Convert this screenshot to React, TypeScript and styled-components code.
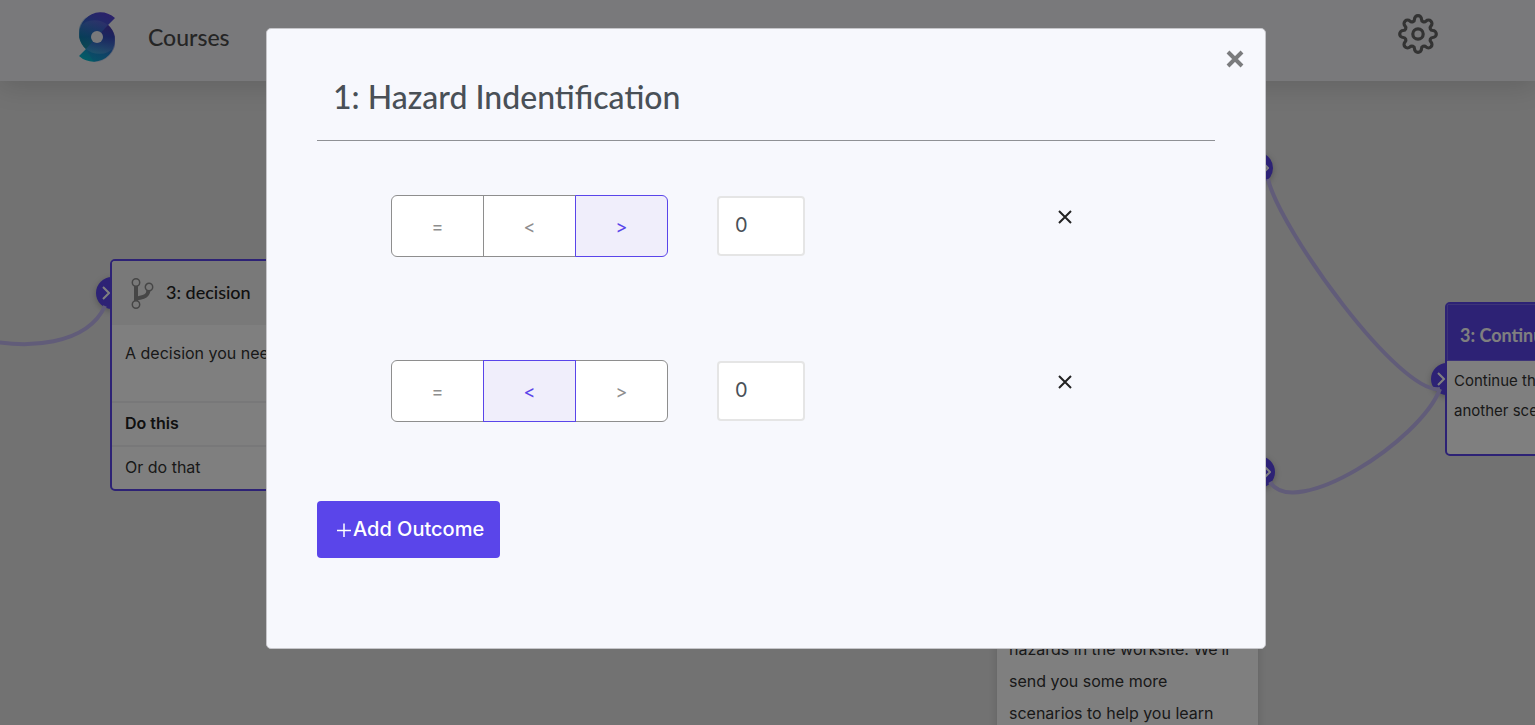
import React, { useState } from "react";
import styled, { createGlobalStyle } from "styled-components";

const brand = "#5a45ea";
const display = `Lato, "Liberation Sans", sans-serif`;
const text = `Inter, "Liberation Sans", sans-serif`;

const GlobalStyle = createGlobalStyle`
  *, *::before, *::after { box-sizing: border-box; }
  body { margin: 0; background: #e4e4e4; font-family: ${text}; color: #333; }
  button, input { font-family: inherit; }
  h1, h2, h3, p, ul { margin: 0; padding: 0; }
`;

const Page = styled.div`
  display: flex;
  flex-direction: column;
  height: 100vh;
  overflow: hidden;
`;

const TopBar = styled.header`
  display: flex;
  align-items: flex-start;
  height: 81px;
  padding: 12px 97px 0 79px;
  background: #f3f3f7;
  box-shadow: 0 4px 28px rgba(0, 0, 0, 0.15);
  position: relative;
  z-index: 1;
`;

const NavLink = styled.a`
  margin-left: 33px;
  font: 500 23px/50px ${display};
  color: #4a4a4a;
  text-decoration: none;
`;

const IconButton = styled.button`
  display: flex;
  align-items: center;
  justify-content: center;
  padding: 0;
  border: 0;
  background: none;
  cursor: pointer;
`;

const SettingsButton = styled(IconButton)`
  width: 40px;
  height: 44px;
  margin-left: auto;
`;

const Canvas = styled.main`
  position: relative;
  flex: 1;
  overflow: hidden;
`;

const Edges = styled.svg`
  position: absolute;
  inset: 0;
  width: 100%;
  height: 100%;
  fill: none;
  stroke: #c2b8f2;
  stroke-width: 4;
`;

const Port = styled.span<{ $x: number; $y: number }>`
  position: absolute;
  left: ${(p) => p.$x}px;
  top: ${(p) => p.$y}px;
  width: 32px;
  height: 32px;
  border-radius: 50%;
  background: ${brand};
  box-shadow: 0 2px 6px rgba(0, 0, 0, 0.25);
`;

const PortChevron = styled.svg<{ $side: "in" | "out" }>`
  display: block;
  width: 8px;
  height: 14px;
  margin: 9px 0 0 ${(p) => (p.$side === "in" ? 6 : 20)}px;
  fill: none;
  stroke: #fff;
  stroke-width: 2;
`;

const Node = styled.article<{ $x: number; $y: number; $w: number; $outlined?: boolean }>`
  position: absolute;
  left: ${(p) => p.$x}px;
  top: ${(p) => p.$y}px;
  width: ${(p) => p.$w}px;
  background: #fff;
  border: ${(p) => (p.$outlined ? `2px solid ${brand}` : "0")};
  border-radius: 5px;
  box-shadow: ${(p) => (p.$outlined ? "none" : "0 0 8px rgba(0, 0, 0, 0.15)")};
  overflow: hidden;
`;

const DecisionHead = styled.div`
  display: flex;
  align-items: center;
  gap: 12px;
  height: 64px;
  padding: 0 0 0 19px;
  background: #f3f3f3;
`;

const NodeTitle = styled.h3<{ $light?: boolean }>`
  padding-bottom: 2px;
  font: ${(p) => (p.$light ? 700 : 500)} 18px/24px ${display};
  color: ${(p) => (p.$light ? "#fff" : "#222")};
  white-space: nowrap;
`;

const NodeText = styled.p<{ $leading: number; $small?: boolean }>`
  font-size: ${(p) => (p.$small ? 15 : 16)}px;
  line-height: ${(p) => p.$leading}px;
  color: #333;
`;

const DecisionBody = styled.div`
  height: 76px;
  padding: 16px 13px;
`;

const Option = styled.div<{ $strong?: boolean }>`
  height: 44px;
  padding: 0 13px;
  border-top: 2px solid #f0f0f2;
  font-size: 16px;
  font-weight: ${(p) => (p.$strong ? 600 : 400)};
  line-height: 41px;
  color: ${(p) => (p.$strong ? "#222" : "#333")};
`;

const ContinueHead = styled.div`
  height: 57px;
  padding: 18px 12px;
  background: ${brand};
  border: 1px solid #7a69f0;
`;

const ContinueBody = styled.div`
  height: 93px;
  padding: 5px 7px;
`;

const StoryBody = styled.div`
  padding: 12px;
`;

const Backdrop = styled.div`
  position: fixed;
  inset: 0;
  z-index: 10;
  padding: 28px 3px 28px 0;
  background: rgba(0, 0, 0, 0.5);
  overflow: auto;
`;

const Dialog = styled.section`
  width: 100%;
  max-width: 1000px;
  margin: 0 auto;
  background: #f7f8fd;
  border: 1px solid #c6c6ca;
  border-radius: 5px;
`;

const DialogTop = styled.div`
  display: flex;
  justify-content: flex-end;
  padding: 20px 20px 0;
`;

const CloseButton = styled(IconButton)`
  width: 20px;
  height: 20px;
`;

const DialogBody = styled.div`
  padding: 8px 50px 90px;
`;

const DialogTitle = styled.h2`
  padding: 0 16px 23px;
  border-bottom: 1px solid #8f9195;
  font: 500 32px/40px ${display};
  color: #495057;
`;

const Outcomes = styled.div`
  display: flex;
  flex-direction: column;
  gap: 103px;
  padding: 54px 138px 79px 74px;
`;

const OutcomeRow = styled.div`
  display: flex;
  align-items: center;
`;

const OperatorGroup = styled.div`
  display: flex;
  margin-right: 49px;
`;

const Operator = styled.button<{ $active: boolean }>`
  position: relative;
  z-index: ${(p) => (p.$active ? 1 : 0)};
  width: 93px;
  height: 62px;
  padding: 0;
  border: 1px solid ${(p) => (p.$active ? brand : "#8e8e8e")};
  background: ${(p) => (p.$active ? "#f0eefb" : "#fff")};
  color: ${(p) => (p.$active ? brand : "#8e8e8e")};
  font-size: 18px;
  cursor: pointer;

  & + & { margin-left: -1px; }
  &:first-child { border-radius: 6px 0 0 6px; }
  &:last-child { border-radius: 0 6px 6px 0; }
`;

const ValueInput = styled.input`
  width: 88px;
  height: 60px;
  padding: 0 16px 2px;
  border: 2px solid #e5e5e5;
  border-radius: 4px;
  background: #fff;
  color: #495057;
  font-size: 20px;
`;

const RemoveButton = styled(IconButton)`
  align-self: flex-start;
  width: 24px;
  height: 24px;
  margin: 10px 0 0 auto;
`;

const AddButton = styled.button`
  display: flex;
  align-items: center;
  gap: 2px;
  height: 57px;
  padding: 0 16px 2px 20px;
  border: 0;
  border-radius: 4px;
  background: ${brand};
  color: #fff;
  font-size: 20px;
  font-weight: 500;
  white-space: nowrap;
  cursor: pointer;
`;

const Logo = () => (
  <svg width="36" height="50" viewBox="0 0 36 50" role="img" aria-label="Home">
    <defs>
      <linearGradient id="mark" x1="30" y1="0" x2="6" y2="50" gradientUnits="userSpaceOnUse">
        <stop offset="0" stopColor="#5a3fd6" />
        <stop offset="0.5" stopColor="#2c6cc8" />
        <stop offset="1" stopColor="#00c0cf" />
      </linearGradient>
      <linearGradient id="left" x1="4" y1="34" x2="18" y2="8" gradientUnits="userSpaceOnUse">
        <stop offset="0" stopColor="#007f9c" />
        <stop offset="1" stopColor="#2a66cc" stopOpacity="0" />
      </linearGradient>
      <linearGradient id="right" x1="31" y1="14" x2="24" y2="42" gradientUnits="userSpaceOnUse">
        <stop offset="0" stopColor="#3a2aa8" />
        <stop offset="1" stopColor="#2f5fd0" stopOpacity="0.2" />
      </linearGradient>
      <linearGradient id="shine" x1="18" y1="7" x2="18" y2="43" gradientUnits="userSpaceOnUse">
        <stop offset="0" stopColor="#fff" stopOpacity="0.12" />
        <stop offset="0.5" stopColor="#fff" stopOpacity="0" />
        <stop offset="1" stopColor="#fff" stopOpacity="0.18" />
      </linearGradient>
    </defs>
    <path d="M36 6A21 21 0 0 0 7 37L0 44A21 21 0 0 0 29 13Z" fill="url(#mark)" />
    <path d="M21 0A21 21 0 0 0 7 37L18 25L29 13A21 21 0 0 0 21 0Z" fill="url(#left)" />
    <path d="M29 13A21 21 0 0 1 15 50L7 37L18 25Z" fill="url(#right)" />
    <path d="M7 37A21 21 0 0 1 1 14A21 21 0 0 1 29 13A21 21 0 0 1 35 36A21 21 0 0 1 7 37Z" fill="url(#shine)" />
    <circle cx="18" cy="25" r="6" fill="#f3f3f7" />
  </svg>
);

const rotate = (x: number, y: number, deg: number) => {
  const a = (deg * Math.PI) / 180;
  return `${(x * Math.cos(a) - y * Math.sin(a)).toFixed(2)} ${(x * Math.sin(a) + y * Math.cos(a)).toFixed(2)}`;
};

const gearPath =
  Array.from({ length: 8 }, (_, i) => {
    const deg = i * 45;
    const lead = i === 0 ? `M${rotate(14.8, -3.5, 0)}` : "";
    return `${lead}A3.5 3.5 0 0 1 ${rotate(14.8, 3.5, deg)}A2.6 2.6 0 0 0 ${rotate(14.8, -3.5, deg + 45)}`;
  }).join("") + "Z";

const Gear = () => (
  <svg width="40" height="40" viewBox="-20 -20 40 40" fill="none" stroke="#666" strokeWidth="3.2" strokeLinejoin="round">
    <path d={gearPath} />
    <circle r="5.2" />
  </svg>
);

const Branch = () => (
  <svg width="23" height="31" viewBox="0 0 23 31" fill="none" stroke="#8c8c8c">
    <path d="M5 8V23M5 22C5 18 17 22 17.500 12" strokeWidth="4" />
    <g strokeWidth="1.500" fill="#f3f3f3">
      <circle cx="5" cy="4.500" r="3.700" />
      <circle cx="18" cy="9" r="3.700" />
      <circle cx="5" cy="26.500" r="3.700" />
    </g>
  </svg>
);

const Cross = ({ size, weight, color }: { size: number; weight: number; color: string }) => (
  <svg width={size} height={size} viewBox={`0 0 ${size} ${size}`} stroke={color} strokeWidth={weight} aria-hidden="true">
    <path d={`M2 2L${size - 2} ${size - 2}M${size - 2} 2L2 ${size - 2}`} />
  </svg>
);

const ConnectionPort = ({ x, y, side }: { x: number; y: number; side: "in" | "out" }) => (
  <Port $x={x} $y={y}>
    <PortChevron $side={side} viewBox="0 0 8 14">
      <path d="M1 1L7 7L1 13" />
    </PortChevron>
  </Port>
);

const operators = ["=", "<", ">"];

function Outcome({ initial, index, onRemove }: { initial: string; index: number; onRemove: () => void }) {
  const [operator, setOperator] = useState(initial);
  const [value, setValue] = useState("0");
  return (
    <OutcomeRow>
      <OperatorGroup role="group" aria-label={`Comparison ${index + 1}`}>
        {operators.map((op) => (
          <Operator key={op} type="button" $active={op === operator} aria-pressed={op === operator} onClick={() => setOperator(op)}>
            {op}
          </Operator>
        ))}
      </OperatorGroup>
      <ValueInput aria-label={`Value ${index + 1}`} inputMode="numeric" value={value} onChange={(e) => setValue(e.target.value)} />
      <RemoveButton type="button" aria-label="Remove outcome" onClick={onRemove}>
        <Cross size={16} weight={2} color="#222" />
      </RemoveButton>
    </OutcomeRow>
  );
}

export default function App() {
  const [open, setOpen] = useState(true);
  const [outcomes, setOutcomes] = useState([
    { id: 1, op: ">" },
    { id: 2, op: "<" },
  ]);

  return (
    <>
      <GlobalStyle />
      <Page>
        <TopBar>
          <Logo />
          <NavLink href="#courses">Courses</NavLink>
          <SettingsButton type="button" aria-label="Settings">
            <Gear />
          </SettingsButton>
        </TopBar>
        <Canvas>
          <ConnectionPort x={96} y={196} side="in" />
          <ConnectionPort x={1241} y={71} side="out" />
          <ConnectionPort x={1243} y={375} side="out" />
          <ConnectionPort x={1431} y={282} side="in" />
          <Edges aria-hidden="true">
            <path d="M-30 255C30 272 88 262 105 225" />
            <path d="M1268 98C1280 149 1400 314 1440 308" />
            <path d="M1270 401C1295 440 1420 360 1440 308" />
          </Edges>
          <Node $x={110} $y={178} $w={264} $outlined>
            <DecisionHead>
              <Branch />
              <NodeTitle>3: decision</NodeTitle>
            </DecisionHead>
            <DecisionBody>
              <NodeText $leading={24}>A decision you need</NodeText>
            </DecisionBody>
            <Option $strong>Do this</Option>
            <Option>Or do that</Option>
          </Node>
          <Node $x={1445} $y={221} $w={264} $outlined>
            <ContinueHead>
              <NodeTitle $light>3: Continue</NodeTitle>
            </ContinueHead>
            <ContinueBody>
              <NodeText $leading={30} $small>
                Continue the
                <br />
                another scenario
              </NodeText>
            </ContinueBody>
          </Node>
          <Node $x={997} $y={540} $w={261}>
            <StoryBody>
              <NodeText $leading={32}>
                hazards in the worksite. We’ll
                <br />
                send you some more
                <br />
                scenarios to help you learn
              </NodeText>
            </StoryBody>
          </Node>
        </Canvas>
      </Page>
      {open && (
        <Backdrop>
          <Dialog role="dialog" aria-modal="true" aria-labelledby="dialog-title">
            <DialogTop>
              <CloseButton type="button" aria-label="Close" onClick={() => setOpen(false)}>
                <Cross size={18} weight={4} color="#7b7c7e" />
              </CloseButton>
            </DialogTop>
            <DialogBody>
              <DialogTitle id="dialog-title">1: Hazard Indentification</DialogTitle>
              <Outcomes>
                {outcomes.map((o, i) => (
                  <Outcome key={o.id} initial={o.op} index={i} onRemove={() => setOutcomes(outcomes.filter((x) => x.id !== o.id))} />
                ))}
              </Outcomes>
              <AddButton type="button" onClick={() => setOutcomes([...outcomes, { id: Date.now(), op: "=" }])}>
                <svg width="14" height="16" viewBox="0 0 14 16" stroke="#fff" strokeWidth="1.500" aria-hidden="true">
                  <path d="M0 9.500H14M7 2.500V16" />
                </svg>
                Add Outcome
              </AddButton>
            </DialogBody>
          </Dialog>
        </Backdrop>
      )}
    </>
  );
}
